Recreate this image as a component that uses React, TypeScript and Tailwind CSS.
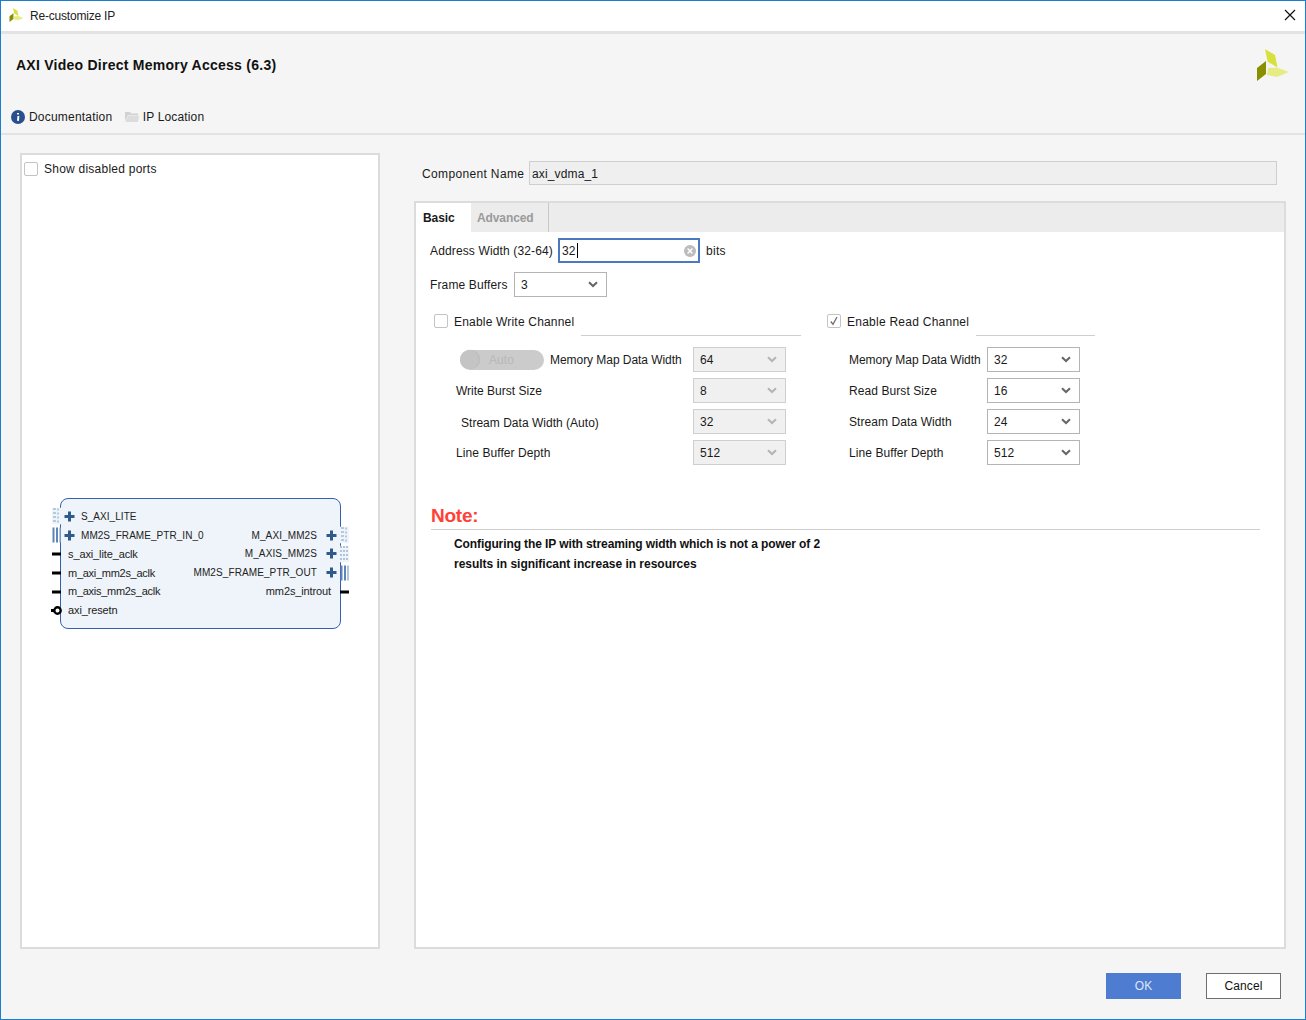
import type { ReactNode } from 'react';

const font = "[font-family:'Liberation_Sans',Arial,sans-serif]";

function Logo({ className }: { className: string }) {
  return (
    <svg viewBox="0 0 32 32" className={className}>
      <polygon points="8,0 18,6 20.5,18.5 10.7,12.7" fill="#d8e03c" />
      <polygon points="11,19 20,18.5 31.7,23 20,28 10,26" fill="#e5ec84" />
      <polygon points="9,12 9,25 0,32 0,19" fill="#8a8f00" />
    </svg>
  );
}

function Chevron({ muted }: { muted?: boolean }) {
  return (
    <svg width="10" height="7" viewBox="0 0 10 7" className="shrink-0">
      <path d="M1 1.2 L5 5 L9 1.2" fill="none" stroke={muted ? '#b4b4b4' : '#666666'} strokeWidth="2" />
    </svg>
  );
}

function Select({ value, disabled }: { value: string; disabled?: boolean }) {
  return (
    <div
      className={`flex h-[25px] w-[93px] shrink-0 items-center justify-between border pl-[6px] pr-[8px] ${
        disabled ? 'border-[#cfcfcf] bg-[#f0f0f0]' : 'border-[#b4b4b4] bg-white'
      }`}
    >
      <span>{value}</span>
      <Chevron muted={disabled} />
    </div>
  );
}

function Checkbox({ checked, className = '' }: { checked?: boolean; className?: string }) {
  return (
    <div className={`flex h-[14px] w-[14px] shrink-0 items-center justify-center rounded-[2px] border border-[#c4c4c4] bg-white ${className}`}>
      {checked && (
        <svg width="10" height="10" viewBox="0 0 10 10">
          <path d="M1.8 5.5 L4 8.4 L8 1" fill="none" stroke="#6f6f6f" strokeWidth="1.3" />
        </svg>
      )}
    </div>
  );
}

function Plus() {
  return (
    <svg width="11" height="11" viewBox="0 0 11 11" className="shrink-0">
      <path d="M5.5 0.5 V10.5 M0.5 5.5 H10.5" stroke="#2f5a8c" strokeWidth="3" />
    </svg>
  );
}

function Stub({ kind, side }: { kind: 'wire' | 'reset' | 'bars' | 'dash' | 'grid'; side: 'left' | 'right' }) {
  const pos = side === 'left' ? 'left-[-9px]' : 'right-[-9px]';
  return (
    <div className={`absolute top-1/2 ${pos} flex h-[19px] w-[9px] -translate-y-1/2 items-center`}>
      {kind === 'wire' && <div className="h-[3px] w-full bg-black" />}
      {kind === 'reset' && (
        <svg width="10" height="10" viewBox="0 0 10 10" className="shrink-0 overflow-visible">
          <rect x="-1" y="3.5" width="4" height="3" fill="#000" />
          <circle cx="5.5" cy="5" r="3.2" fill="#fff" stroke="#000" strokeWidth="2.4" />
        </svg>
      )}
      {kind === 'bars' && (
        <svg width="9" height="17" viewBox="0 0 9 17" className="shrink-0">
          <path d="M1.5 1 V16 M5 1 V16" stroke="#5d85b5" strokeWidth="2" />
          <path d="M8 1 V16" stroke="#8fb0d0" strokeWidth="1.4" />
        </svg>
      )}
      {kind === 'dash' && (
        <svg width="9" height="17" viewBox="0 0 9 17" className="shrink-0">
          <rect width="9" height="17" fill="#eef4fa" />
          <path d="M1 1.5 H4 M1 5.5 H4 M1 9.5 H4 M1 13.5 H4 M6 1 V3 M6 5 V7 M6 9 V11 M6 13 V15" stroke="#7ea0c4" strokeWidth="1" />
        </svg>
      )}
      {kind === 'grid' && (
        <svg width="9" height="17" viewBox="0 0 9 17" className="shrink-0">
          <rect width="9" height="17" fill="#eef4fa" />
          <path d="M0 1.5 H9 M0 5.5 H9 M0 9.5 H9 M0 13.5 H9" stroke="#6f95bd" strokeWidth="1" strokeDasharray="2 1" />
        </svg>
      )}
    </div>
  );
}

function PortRow({
  left,
  right,
  leftPlus,
  rightPlus,
  leftStub,
  rightStub,
  tight,
}: {
  left?: string;
  right?: string;
  leftPlus?: boolean;
  rightPlus?: boolean;
  leftStub: 'wire' | 'reset' | 'bars' | 'dash';
  rightStub?: 'wire' | 'bars' | 'dash' | 'grid';
  tight?: boolean;
}) {
  return (
    <div className="relative flex h-[18.8px] items-center justify-between pl-[3px] pr-[3px]">
      <Stub kind={leftStub} side="left" />
      <div className="flex items-center">
        {leftPlus ? <Plus /> : <span className="w-[4px]" />}
        <span className={leftPlus ? 'ml-[6px] text-[10px] tracking-[0.05px]' : tight ? 'tracking-[-0.28px]' : 'tracking-[-0.12px]'}>{left}</span>
      </div>
      <div className="flex items-center">
        <span className={rightPlus ? 'mr-[9px] text-[10px] tracking-[0.1px]' : 'mr-[6px] tracking-[-0.12px]'}>{right}</span>
        {rightPlus && <Plus />}
      </div>
      {rightStub && <Stub kind={rightStub} side="right" />}
    </div>
  );
}

function Row({ children, select, disabled, width }: { children: ReactNode; select: string; disabled?: boolean; width: string }) {
  return (
    <div className="flex h-[25px] items-center tracking-[0.08px]">
      <div className={`flex items-center ${width}`}>{children}</div>
      <Select value={select} disabled={disabled} />
    </div>
  );
}

export default function App() {
  return (
    <div className={`${font} h-[1020px] w-[1306px] overflow-hidden border border-[#1a7fd0] bg-[#f5f5f5] text-[12px] tracking-[0.14px] text-[#1a1a1a]`}>
      {/* title bar */}
      <div className="flex h-[33px] items-center justify-between border-b-[3px] border-[#e3e3e3] bg-white pl-[8px] pr-[9px]">
        <div className="flex items-center gap-[6px]">
          <Logo className="mb-[2px] h-[14px] w-[15px]" />
          <span className="tracking-[-0.2px] text-[#222]">Re-customize IP</span>
        </div>
        <svg width="12" height="12" viewBox="0 0 12 12" className="mb-[2px]">
          <path d="M1 1 L11 11 M11 1 L1 11" stroke="#111" strokeWidth="1.2" />
        </svg>
      </div>

      {/* header */}
      <div className="flex h-[101px] flex-col border-b-2 border-[#e3e3e3]">
        <div className="flex items-start justify-between pr-[16px] pt-[15px]">
          <h1 className="mt-[7px] pl-[15px] text-[14px] leading-[18px] font-bold tracking-[0.25px] text-[#111]">
            AXI Video Direct Memory Access (6.3)
          </h1>
          <Logo className="h-[32px] w-[32px]" />
        </div>
        <div className="mt-[27px] flex items-center pl-[10px] tracking-[0.2px]">
          <svg width="14" height="14" viewBox="0 0 14 14" className="shrink-0">
            <circle cx="7" cy="7" r="7" fill="#2a4f8f" />
            <path d="M7 3 V4.6 M7.4 6 L7 10.8" stroke="#fff" strokeWidth="1.9" />
          </svg>
          <span className="ml-[4px]">Documentation</span>
          <svg width="14" height="12" viewBox="0 0 14 12" className="ml-[12.5px] shrink-0">
            <path d="M0 1 H5 L6 2.5 H13 V4 H3 L0 10 Z" fill="#d2d2d2" />
            <path d="M3 4.5 H14 L13 11 H0.5 Z" fill="#dcdcdc" />
          </svg>
          <span className="ml-[4px] tracking-[0.14px]">IP Location</span>
        </div>
      </div>

      {/* main */}
      <div className="mt-[18px] flex pl-[19px]">
        {/* symbol panel */}
        <div className="h-[796px] w-[360px] border-2 border-[#dcdcdc] bg-white">
          <div className="flex items-center gap-[6px] pl-[2px] pt-[5px] tracking-[0.24px]">
            <Checkbox />
            <span>Show disabled ports</span>
          </div>
          <div className="ml-[38px] mt-[320px] h-[131px] w-[281px] rounded-[8px] border border-[#3560ad] bg-[#eef4f9] pt-[8px] text-[11px] text-[#222]">
            <PortRow left="S_AXI_LITE" leftPlus leftStub="dash" />
            <PortRow left="MM2S_FRAME_PTR_IN_0" right="M_AXI_MM2S" leftPlus rightPlus leftStub="bars" rightStub="dash" />
            <PortRow left="s_axi_lite_aclk" right="M_AXIS_MM2S" rightPlus leftStub="wire" rightStub="grid" />
            <PortRow left="m_axi_mm2s_aclk" right="MM2S_FRAME_PTR_OUT" rightPlus leftStub="wire" rightStub="bars" tight />
            <PortRow left="m_axis_mm2s_aclk" right="mm2s_introut" leftStub="wire" rightStub="wire" tight />
            <PortRow left="axi_resetn" leftStub="reset" />
          </div>
        </div>

        {/* config panel */}
        <div className="ml-[34px] w-[872px]">
          <div className="flex h-[48px] items-start pt-[8px]">
            <span className="ml-[8px] mt-[4px] w-[107px] tracking-[0.35px]">Component Name</span>
            <div className="flex h-[24px] w-[748px] items-center border border-[#cfcfcf] bg-[#efefef] pl-[2px] pt-[1px]">axi_vdma_1</div>
          </div>

          <div className="h-[748px] border-2 border-[#dcdcdc] bg-white">
            <div className="flex h-[29px] items-stretch bg-[#ececec] tracking-[-0.1px]">
              <div className="flex w-[55px] items-center bg-white pl-[7px] font-bold">Basic</div>
              <div className="flex w-[78px] items-center border-r border-[#c8c8c8] pl-[6px] font-bold text-[#9a9a9a]">Advanced</div>
            </div>

            <div className="pl-[14px]">
              <div className="mt-[6px] flex items-center">
                <span className="w-[128px]">Address Width (32-64)</span>
                <div className="flex h-[25px] w-[142px] items-center justify-between border-2 border-[#4a78c2] bg-white pl-[2px] pr-[2px]">
                  <span className="flex items-center">
                    32<span className="ml-[1px] h-[15px] w-px bg-black" />
                  </span>
                  <svg width="12" height="12" viewBox="0 0 12 12">
                    <circle cx="6" cy="6" r="6" fill="#bcbcbc" />
                    <path d="M3.6 3.6 L8.4 8.4 M8.4 3.6 L3.6 8.4" stroke="#fff" strokeWidth="1.4" />
                  </svg>
                </div>
                <span className="ml-[6px] tracking-[0.3px]">bits</span>
              </div>

              <div className="mt-[9px] flex items-center">
                <span className="w-[84px]">Frame Buffers</span>
                <Select value="3" />
              </div>

              <div className="mt-[14px] flex pl-[4px]">
                {/* write channel */}
                <div className="w-[393px]">
                  <div className="flex h-[25px] items-start">
                    <Checkbox className="mt-[3px]" />
                    <span className="ml-[6px] mt-[2px] w-[127px] tracking-[0.19px]">Enable Write Channel</span>
                    <div className="mt-[24px] h-px w-[220px] bg-[#cfcfcf]" />
                  </div>
                  <div className="mt-[11px] flex flex-col gap-[6px]">
                    <Row select="64" disabled width="w-[259px]">
                      <div className="ml-[26px] flex h-[20px] w-[84px] items-center rounded-full bg-[#cbcbcb]">
                        <div className="h-[19px] w-[19px] rounded-full bg-[#c4c4c4] shadow-[1px_0_1px_#b8b8b8]" />
                        <span className="ml-[10px] text-[#b8b8b8]">Auto</span>
                      </div>
                      <span className="ml-[6px] tracking-[-0.05px]">Memory Map Data Width</span>
                    </Row>
                    <Row select="8" disabled width="w-[259px]">
                      <span className="ml-[22px] tracking-[0px]">Write Burst Size</span>
                    </Row>
                    <Row select="32" disabled width="w-[259px]">
                      <span className="ml-[27px] mt-[2px] tracking-[0.02px]">Stream Data Width (Auto)</span>
                    </Row>
                    <Row select="512" disabled width="w-[259px]">
                      <span className="ml-[22px]">Line Buffer Depth</span>
                    </Row>
                  </div>
                </div>

                {/* read channel */}
                <div>
                  <div className="flex h-[25px] items-start">
                    <Checkbox checked className="mt-[3px]" />
                    <span className="ml-[6px] mt-[2px] w-[129px] tracking-[0.25px]">Enable Read Channel</span>
                    <div className="mt-[24px] h-px w-[119px] bg-[#cfcfcf]" />
                  </div>
                  <div className="mt-[11px] flex flex-col gap-[6px]">
                    <Row select="32" width="w-[160px]">
                      <span className="ml-[22px] tracking-[-0.05px]">Memory Map Data Width</span>
                    </Row>
                    <Row select="16" width="w-[160px]">
                      <span className="ml-[22px]">Read Burst Size</span>
                    </Row>
                    <Row select="24" width="w-[160px]">
                      <span className="ml-[22px]">Stream Data Width</span>
                    </Row>
                    <Row select="512" width="w-[160px]">
                      <span className="ml-[22px]">Line Buffer Depth</span>
                    </Row>
                  </div>
                </div>
              </div>

              {/* note */}
              <div className="ml-[1px] mt-[40px] w-[829px] border-b border-[#cfcfcf] pb-[2px] text-[19px] leading-[22px] font-bold tracking-[-0.25px] text-[#ff4136]">
                Note:
              </div>
              <div className="ml-[24px] mt-[4px] leading-[20px] font-bold text-[#111]">
                <p className="tracking-[-0.1px]">Configuring the IP with streaming width which is not a power of 2</p>
                <p className="tracking-[-0.02px]">results in significant increase in resources</p>
              </div>
            </div>
          </div>
        </div>
      </div>

      {/* footer */}
      <div className="mt-[24px] flex justify-end gap-[25px] pr-[24px]">
        <button className="h-[26px] w-[75px] bg-[#4e7cd0] text-[#dce6f7]">OK</button>
        <button className="h-[26px] w-[75px] border border-[#6e6e6e] bg-white text-[#111]">Cancel</button>
      </div>
    </div>
  );
}
